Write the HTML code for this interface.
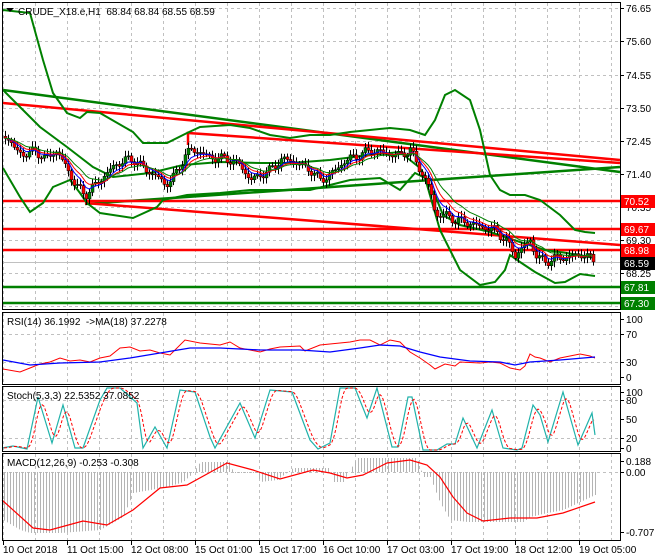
<!DOCTYPE html>
<html><head><meta charset="utf-8"><style>
html,body{margin:0;padding:0;background:#fff;}
svg{display:block;font-family:"Liberation Sans",sans-serif;font-size:10px;}
</style></head><body>
<svg id="s" width="660" height="560" xmlns="http://www.w3.org/2000/svg">
<rect width="660" height="560" fill="#fff"/>
<g id="grid" stroke="#c0c0c0" stroke-dasharray="3,3" stroke-width="1"></g>
<g id="lines"></g>
<g id="cand"></g>
<g id="ind"></g>
<g id="frame" fill="none" stroke="#000" stroke-width="1">
<rect x="2.5" y="2.5" width="618" height="307"/>
<rect x="2.5" y="312.5" width="618" height="72"/>
<rect x="2.5" y="386.5" width="618" height="65"/>
<rect x="2.5" y="453.5" width="618" height="87"/>
</g>
<g id="axis" fill="#000"></g>
<polygon points="6,8 14,8 10,12" fill="#000"/>
<text x="18" y="15" fill="#000">CRUDE_X18.e,H1&#160; 68.84 68.84 68.55 68.59</text>
<text x="7" y="325" fill="#000">RSI(14) 36.1992 &#160;-&gt;MA(18) 37.2278</text>
<text x="7" y="399" fill="#000">Stoch(5,3,3) 22.5352 37.0852</text>
<text x="7" y="466" fill="#000">MACD(12,26,9) -0.253 -0.308</text>
</svg>
<script>
const NS="http://www.w3.org/2000/svg";
function el(p,t,a,txt){const e=document.createElementNS(NS,t);for(const k in a)e.setAttribute(k,a[k]);if(txt!=null)e.textContent=txt;document.getElementById(p).appendChild(e);return e;}
function interp(pts,x){if(x<=pts[0][0])return pts[0][1];for(let i=1;i<pts.length;i++){if(x<=pts[i][0]){const a=pts[i-1],b=pts[i];return a[1]+(b[1]-a[1])*(x-a[0])/(b[0]-a[0]);}}return pts[pts.length-1][1];}
function pl(p,pts,c,w,extra){const a={points:pts.map(q=>q[0]+","+q[1]).join(" "),fill:"none",stroke:c,"stroke-width":w||1};Object.assign(a,extra||{});el(p,"polyline",a);}
const vx=[3,35,67,99,131,163,195,227,259,291,323,355,387,419,451,483,515,547,579,611];
vx.forEach(x=>{[[3,309],[313,384],[387,451],[454,540]].forEach(r=>el("grid","line",{x1:x+.5,y1:r[0],x2:x+.5,y2:r[1]}));});
[8,41,75,108,141,174,207,240,273,306].forEach(y=>el("grid","line",{x1:3,y1:y+.5,x2:620,y2:y+.5}));
[334,362,400,438,472].forEach(y=>el("grid","line",{x1:3,y1:y+.5,x2:620,y2:y+.5}));
pl("lines",[[3,90],[620,172]],"#008000",2.5);
pl("lines",[[85,204],[620,167]],"#008000",2.5);
pl("lines",[[3,103],[620,160]],"#ff0000",2.5);
pl("lines",[[188,145],[188,133],[620,163]],"#ff0000",2.5);
pl("lines",[[85,203],[620,245]],"#ff0000",2.5);
pl("lines",[[3,201],[620,201]],"#ff0000",2.5);
pl("lines",[[3,229],[620,229]],"#ff0000",2.5);
pl("lines",[[3,250],[620,250]],"#ff0000",2.5);
pl("lines",[[3,287],[620,287]],"#008000",2.5);
pl("lines",[[3,303],[620,303]],"#008000",2.5);
pl("lines",[[3,262.5],[620,262.5]],"#c0c0c0",1);
// slow MA
pl("lines",[[3,90],[20,107],[40,127],[67,147],[93,167],[113,177],[150,173],[183,165],[220,162],[260,163],[290,163],[330,160],[370,155],[400,152],[420,168],[435,195],[443,215],[460,225],[490,232],[520,242],[545,250],[567,253],[595,258]],"#008000",2);
// bands
pl("lines",[[3,10],[30,13],[43,60],[53,93],[67,113],[80,118],[87,112],[100,113],[133,132],[143,143],[167,143],[187,133],[200,127],[230,125],[250,128],[270,135],[290,138],[310,135],[330,135],[350,132],[370,130],[390,128],[410,130],[425,135],[435,120],[445,95],[455,90],[470,100],[480,130],[490,175],[500,190],[510,195],[525,195],[540,200],[560,215],[575,230],[585,232],[595,233]],"#008000",2);
pl("lines",[[3,168],[20,197],[30,212],[43,203],[53,187],[70,180],[80,193],[87,203],[100,213],[133,218],[157,207],[163,200],[187,195],[220,193],[250,190],[280,190],[310,190],[330,185],[350,180],[380,178],[400,190],[415,173],[425,178],[440,230],[460,270],[480,285],[495,282],[505,270],[510,255],[520,262],[535,272],[555,283],[565,282],[580,274],[595,276]],"#008000",2);
const kp=[[5,135],[15,150],[25,155],[35,150],[45,160],[55,150],[65,165],[75,185],[85,195],[95,185],[105,175],[115,165],[125,160],[135,160],[145,170],[155,175],[165,185],[175,175],[185,155],[190,150],[200,152],[210,158],[220,158],[230,160],[240,165],[250,180],[260,175],[270,170],[280,160],[290,160],[300,165],[310,170],[320,180],[330,175],[340,165],[350,158],[360,155],[370,150],[380,152],[390,155],[400,155],[410,150],[420,170],[430,190],[435,215],[445,215],[455,220],[465,222],[475,225],[485,228],[495,230],[505,240],[515,255],[525,245],[530,240],[535,255],[545,262],[555,258],[565,258],[575,255],[585,255],[595,262]];
let closes=[],xs=[];
for(let x=5;x<=595;x+=3){xs.push(x);closes.push(interp(kp,x)+Math.sin(x*1.7)*3+Math.sin(x*0.53)*2);}
let prev=closes[0]-2;
closes.forEach((c,i)=>{const x=xs[i];const o=prev;const hi=Math.min(o,c)-2-Math.abs(Math.sin(x*2.3))*4;const lo=Math.max(o,c)+2+Math.abs(Math.cos(x*1.9))*4;
const col=c<o?"#008000":"#ff0000";
el("cand","line",{x1:x+.5,y1:hi,x2:x+.5,y2:lo,stroke:"#000","stroke-width":1});
el("cand","rect",{x:x-1,y:Math.min(o,c),width:3,height:Math.max(1,Math.abs(c-o)),fill:col,stroke:"#000","stroke-width":.5});prev=c;});
function ema(n,col){let e=closes[0],pts=[];closes.forEach((c,i)=>{e=e+(c-e)*2/(n+1);pts.push([xs[i],e.toFixed(1)]);});pl("cand",pts,col,1);}
ema(6,"#0000ff");ema(9,"#ff0000");ema(14,"#008000");
pl("ind",[[3,369],[20,372],[30,368],[40,364],[50,362],[60,358],[70,361],[80,360],[90,362],[100,358],[110,356],[120,348],[130,347],[140,351],[150,350],[160,353],[170,355],[185,340],[200,343],[210,344],[220,345],[230,342],[240,348],[260,352],[270,349],[280,347],[300,346],[305,351],[320,345],[340,343],[350,342],[360,340],[370,340],[380,345],[390,340],[400,342],[410,352],[420,358],[430,365],[435,369],[445,364],[455,366],[460,362],[480,363],[490,362],[500,363],[510,368],[520,370],[525,366],[530,354],[535,357],[540,358],[550,362],[560,358],[570,356],[580,354],[590,356],[595,358]],"#ff0000",1);
pl("ind",[[3,360],[30,365],[60,363],[100,362],[130,358],[160,353],[190,348],[220,348],[260,350],[300,350],[330,352],[360,348],[380,345],[400,346],[420,352],[440,357],[470,361],[500,362],[515,365],[530,362],[560,360],[595,357]],"#0000ff",1.3);
const st=[[2,448],[13,446],[27,449],[38,397],[52,443],[63,405],[75,448],[83,448],[100,400],[107,388],[120,388],[137,403],[143,448],[155,427],[167,448],[180,390],[195,392],[210,437],[215,448],[240,403],[255,438],[270,390],[292,392],[310,440],[318,449],[330,443],[340,388],[355,388],[367,418],[377,388],[392,447],[398,447],[408,397],[412,397],[423,450],[437,450],[447,444],[455,444],[463,418],[477,448],[492,410],[503,448],[517,450],[522,448],[533,405],[540,415],[548,442],[563,392],[578,445],[592,413],[595,435]];
pl("ind",st,"#20b2aa",1.2);
let sig=[];for(let x=4;x<=595;x+=2){let s=0;for(let k=0;k<8;k++)s+=interp(st,x-k);sig.push([x,(s/8).toFixed(1)]);}
pl("ind",sig,"#ff0000",1,{"stroke-dasharray":"3,2"});
const hb=[[3,520],[20,530],[30,533],[60,533],[100,530],[123,517],[133,493],[167,487],[183,482],[193,473],[200,462],[230,462],[233,473],[257,473],[260,482],[277,480],[293,468],[330,468],[333,482],[343,482],[357,458],[417,458],[423,477],[430,477],[440,503],[450,520],[467,522],[523,522],[530,517],[547,513],[563,510],[580,502],[595,495]];
for(let x=4;x<=596;x+=3){const y=interp(hb,x);el("ind","line",{x1:x+.5,y1:472,x2:x+.5,y2:y,stroke:"#b4b4b4","stroke-width":1});}
pl("ind",[[2,500],[33,528],[50,530],[83,521],[107,525],[133,510],[160,488],[187,485],[227,463],[253,470],[280,479],[313,470],[330,473],[347,478],[363,475],[387,463],[410,460],[427,465],[440,477],[453,497],[467,513],[483,521],[510,518],[537,518],[563,513],[595,502]],"#ff0000",1.2);
function lab(y,t){el("axis","line",{x1:620,y1:y+.5,x2:624,y2:y+.5,stroke:"#000"});el("axis","text",{x:626,y:y+4},t);}
[[8,"76.65"],[41,"75.60"],[75,"74.55"],[108,"73.50"],[141,"72.45"],[174,"71.40"],[207,"70.35"],[240,"69.30"],[273,"68.25"],[306,"67.20"],[319,"100"],[334,"70"],[362,"30"],[377,"0"],[392,"100"],[400,"80"],[419,"50"],[438,"20"],[448,"0"],[461,"0.188"],[472,"0.00"],[532,"-0.707"]].forEach(a=>lab(a[0],a[1]));
function box(y,t,bg){el("axis","rect",{x:621,y:y-6,width:34,height:13,fill:bg});el("axis","text",{x:624,y:y+4,fill:"#fff"},t);}
box(201,"70.52","#ff0000");box(229,"69.67","#ff0000");box(250,"68.98","#ff0000");box(263,"68.59","#000");box(287,"67.81","#008000");box(303,"67.30","#008000");
[[3,"10 Oct 2018"],[67,"11 Oct 15:00"],[131,"12 Oct 08:00"],[195,"15 Oct 01:00"],[259,"15 Oct 17:00"],[323,"16 Oct 10:00"],[387,"17 Oct 03:00"],[451,"17 Oct 19:00"],[515,"18 Oct 12:00"],[579,"19 Oct 05:00"]].forEach(a=>{el("axis","line",{x1:a[0]+.5,y1:540,x2:a[0]+.5,y2:545,stroke:"#000"});el("axis","text",{x:a[0],y:553},a[1]);});
</script>
</body></html>
